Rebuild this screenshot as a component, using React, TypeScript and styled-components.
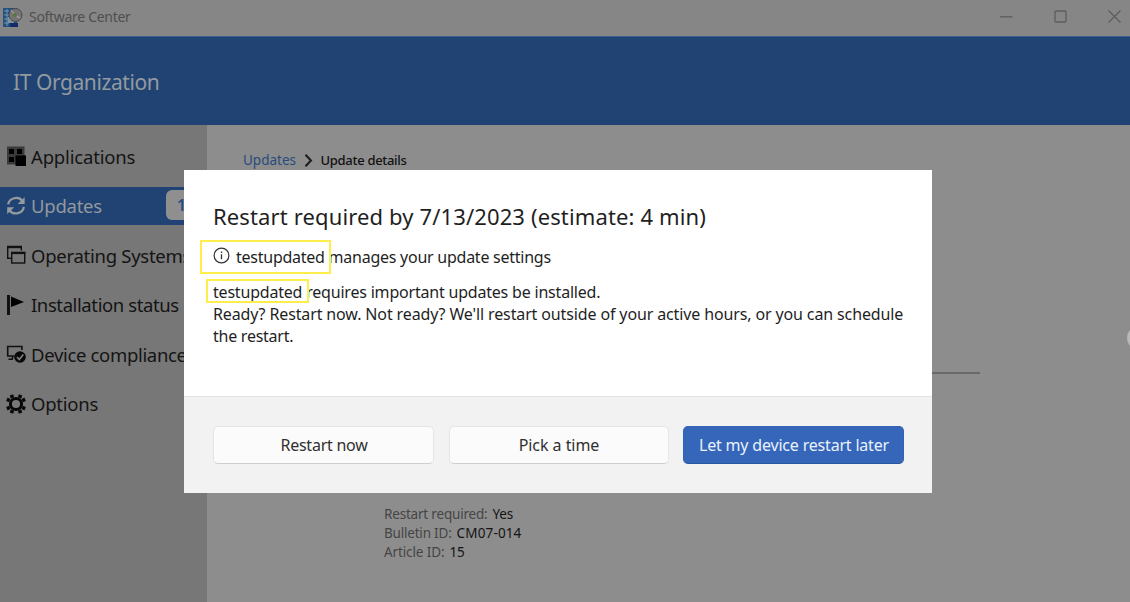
import React from 'react';
import styled, { createGlobalStyle } from 'styled-components';

const GlobalStyle = createGlobalStyle`
  * { box-sizing: border-box; }
  body {
    margin: 0;
    overflow: hidden;
    font-family: "Noto Sans", "Open Sans", sans-serif;
  }
`;

const Window = styled.div`
  position: relative;
  width: 1130px;
  height: 602px;
  display: flex;
  flex-direction: column;
  background: #8d8d8d;
  overflow: hidden;
`;

const TitleBar = styled.header`
  height: 36px;
  flex: none;
  display: flex;
  align-items: center;
  background: #868686;
  color: #4f4f4f;
  padding-left: 3px;
`;

const Label = styled.span<{ $size: number; $track?: number; $weight?: number; $color?: string }>`
  font-size: ${p => p.$size}px;
  letter-spacing: ${p => p.$track ?? 0}px;
  font-weight: ${p => p.$weight ?? 400};
  color: ${p => p.$color ?? 'inherit'};
  white-space: pre;
`;

const TitleText = styled.div`
  margin: -4px 0 0 6px;
  flex: 1;
`;

const WindowControls = styled.div`
  display: flex;
  align-items: center;
  gap: 41px;
  margin: -4px 9px 0 0;
`;

const Banner = styled.div`
  height: 89px;
  flex: none;
  display: flex;
  align-items: center;
  padding: 1px 0 0 13px;
  background: #204373;
  border-top: 1px solid #3a618c;
  color: #939a9f;
`;

const Body = styled.div`
  flex: 1;
  display: flex;
`;

const Sidebar = styled.nav`
  width: 207px;
  flex: none;
  display: flex;
  flex-direction: column;
  gap: 11.5px;
  padding-top: 12px;
  background: #777777;
`;

const NavItem = styled.div<{ $active?: boolean }>`
  height: 38px;
  display: flex;
  align-items: center;
  gap: 5px;
  padding-left: 6px;
  background: ${p => (p.$active ? '#204373' : 'transparent')};
  color: ${p => (p.$active ? '#92999f' : '#141414')};
`;

const NavIcon = styled.svg`
  width: 20px;
  height: 20px;
  flex: none;
`;

const Badge = styled.span`
  width: 34px;
  height: 30px;
  margin: -2px 7px 0 auto;
  display: flex;
  align-items: center;
  padding-left: 11px;
  border-radius: 6px;
  background: #8f8f8f;
  color: #274c80;
`;

const Main = styled.main`
  flex: 1;
  display: flex;
  flex-direction: column;
  padding: 25px 0 0 36px;
`;

const Breadcrumb = styled.div`
  height: 20px;
  display: flex;
  align-items: center;
`;

const Crumb = styled.svg`
  width: 9px;
  height: 13px;
  margin: 0 8px 0 7.5px;
`;

const Divider = styled.div`
  width: 737px;
  height: 2px;
  margin-top: 202px;
  background: #696969;
`;

const Details = styled.div`
  margin: 130px 0 0 141px;
`;

const DetailRow = styled.div`
  height: 19px;
  display: flex;
  align-items: center;
  gap: 5px;
`;

const Handle = styled.div`
  position: absolute;
  left: 1127px;
  top: 325px;
  width: 26px;
  height: 26px;
  border-radius: 50%;
  background: #b9b9b9;
`;

const Dialog = styled.section`
  position: absolute;
  left: 184px;
  top: 169.5px;
  width: 748px;
  height: 323px;
  display: flex;
  flex-direction: column;
  background: #ffffff;
  color: #1f1f1f;
`;

const DialogBody = styled.div`
  height: 226.5px;
  padding: 31px 0 0 29px;
  display: flex;
  flex-direction: column;
`;

const DialogTitle = styled.div`
  height: 30px;
  display: flex;
  align-items: center;
`;

const TextLine = styled.div<{ $top?: number }>`
  position: relative;
  height: 22px;
  margin-top: ${p => p.$top ?? 0}px;
  display: flex;
  align-items: center;
`;

const InfoIcon = styled.svg`
  width: 17px;
  height: 17px;
  margin: -3px 6px 0 0;
`;

const Highlight = styled.div<{ $left: number; $top: number; $width: number; $height: number }>`
  position: absolute;
  left: ${p => p.$left}px;
  top: ${p => p.$top}px;
  width: ${p => p.$width}px;
  height: ${p => p.$height}px;
  border: 2px solid #fdee4b;
`;

const DialogFooter = styled.footer`
  flex: 1;
  display: flex;
  align-items: flex-start;
  gap: 14.5px;
  padding: 29px 28px 0 29px;
  border-top: 1px solid #e4e4e4;
  background: #f2f2f2;
`;

const Button = styled.button<{ $primary?: boolean; $width: number }>`
  width: ${p => p.$width}px;
  height: 38px;
  padding: 0 0 0 1px;
  display: flex;
  align-items: center;
  justify-content: center;
  font-family: inherit;
  border-radius: 5px;
  border: 1px solid ${p => (p.$primary ? '#3264b5' : '#e5e5e5')};
  border-bottom-color: ${p => (p.$primary ? '#28569f' : '#cfcfcf')};
  background: ${p => (p.$primary ? '#3566ba' : '#fbfbfb')};
  color: ${p => (p.$primary ? '#eaf2fb' : '#303030')};
`;

const AppLogo = () => (
  <svg width="20" height="21" viewBox="0 0 20 21">
    <rect x="0" y="0" width="14" height="19" fill="#23507e" />
    <path d="M1 3h5M1 7h5M1 11h5M1 15h5M4 1v17" stroke="#7795ab" strokeWidth="1" />
    <rect x="5" y="9" width="6" height="6" fill="#7d939f" />
    <circle cx="12.5" cy="7" r="6.5" fill="#747474" stroke="#4c4c4c" />
    <path d="M12 7L8 2M12 7l5 3" stroke="#979797" strokeWidth="1.5" />
    <circle cx="12" cy="7" r="2" fill="#5b7440" />
    <rect x="7" y="15" width="8" height="4" fill="#102b66" />
  </svg>
);

const AppsIcon = () => (
  <NavIcon viewBox="0 0 20 20">
    <rect x="1" y="0.5" width="18" height="18" fill="#3a3a3a" />
    <path d="M3 3h5v5H3zM11 3h5v5h-5zM3 11h5v5H3z" fill="#000" />
    <path d="M9.5 9.5H20V20H9.500z" fill="#000" />
    <path d="M19 .5V9" stroke="#777" strokeWidth="1" />
  </NavIcon>
);

const SyncIcon = () => (
  <NavIcon viewBox="0 0 20 20" fill="none" stroke="#949b9f" strokeWidth="2.3">
    <path d="M2.200 8.400A8 7.500 0 0 1 16.500 5" />
    <path d="M17.800 10.800A8 7.500 0 0 1 3.500 14.400" />
    <path d="M18.600 1.200v6.800h-7z" fill="#949b9f" stroke="none" />
    <path d="M1.200 18v-6.800h7z" fill="#949b9f" stroke="none" />
  </NavIcon>
);

const SystemsIcon = () => (
  <NavIcon viewBox="0 0 20 20" fill="none" stroke="#111" strokeWidth="1.400">
    <path d="M1.700 14V1.500h13.600v4" />
    <path d="M1 2.200h15" strokeWidth="2" />
    <path d="M2 13.300h3" />
    <rect x="5.700" y="7.500" width="13" height="10.500" />
    <path d="M5 8h14.400" strokeWidth="2.200" />
  </NavIcon>
);

const FlagIcon = () => (
  <NavIcon viewBox="0 0 20 20">
    <path d="M1 0h3v20H1z" fill="#111" />
    <path d="M5 1.500l13 5.500-13 5z" fill="#000" />
  </NavIcon>
);

const DeviceIcon = () => (
  <NavIcon viewBox="0 0 20 20" fill="none">
    <path d="M8 12H1.700V2.500h14.200V6" stroke="#111" strokeWidth="1.600" />
    <path d="M2.500 15.300H7M6.500 12v3" stroke="#111" strokeWidth="1.500" />
    <circle cx="14" cy="13" r="5.800" fill="#080808" />
    <path d="M11 13l2.300 2.500 4-5" stroke="#858585" strokeWidth="1.500" />
  </NavIcon>
);

const GearIcon = () => (
  <NavIcon viewBox="0 0 20 20" fill="none" stroke="#080808">
    <circle cx="10" cy="10" r="5.600" strokeWidth="3" />
    <g strokeWidth="3.600">
      <path d="M6.500 3.800L5.400.8M13.500 3.800L14.600.8M6.500 16.200l-1.100 3M13.500 16.200l1.100 3M3.800 6.500L.8 5.400M3.800 13.500l-3 1.100M16.200 6.500l3-1.100M16.200 13.500l3 1.100" />
    </g>
  </NavIcon>
);

const navItems = [
  { text: 'Applications', icon: <AppsIcon />, track: -0.17 },
  { text: 'Updates', icon: <SyncIcon />, track: -0.25, count: '1' },
  { text: 'Operating Systems', icon: <SystemsIcon />, track: -0.27 },
  { text: 'Installation status', icon: <FlagIcon />, track: -0.4 },
  { text: 'Device compliance', icon: <DeviceIcon />, track: -0.33 },
  { text: 'Options', icon: <GearIcon />, track: -0.25 },
];

const details = [
  { name: 'Restart required:', value: 'Yes', track: -0.19, valueTrack: -0.2 },
  { name: 'Bulletin ID:', value: 'CM07-014', track: -0.2, valueTrack: 0.15 },
  { name: 'Article ID:', value: '15', track: -0.12, valueTrack: 0 },
];

export default function App() {
  return (
    <>
      <GlobalStyle />
      <Window>
        <TitleBar>
          <AppLogo />
          <TitleText><Label $size={14} $track={-0.3}>Software Center</Label></TitleText>
          <WindowControls>
            <svg width="13" height="13" viewBox="0 0 13 13"><path d="M0 6.800h12.500" stroke="#5d5d5d" strokeWidth="1.300" /></svg>
            <svg width="13" height="13" viewBox="0 0 13 13"><rect x="1" y="1" width="11" height="11" rx="1" fill="none" stroke="#5d5d5d" strokeWidth="1.300" /></svg>
            <svg width="13" height="13" viewBox="0 0 13 13"><path d="M.5.5l12 12M12.500.5l-12 12" stroke="#5d5d5d" strokeWidth="1.300" /></svg>
          </WindowControls>
        </TitleBar>
        <Banner><Label $size={21} $track={-0.42}>IT Organization</Label></Banner>
        <Body>
          <Sidebar>
            {navItems.map(item => (
              <NavItem key={item.text} $active={!!item.count}>
                {item.icon}
                <Label $size={18.5} $track={item.track}>{item.text}</Label>
                {item.count && <Badge><Label $size={16} $weight={600}>{item.count}</Label></Badge>}
              </NavItem>
            ))}
          </Sidebar>
          <Main>
            <Breadcrumb>
              <Label $size={13.5} $color="#284a7c">Updates</Label>
              <Crumb viewBox="0 0 9 13" fill="none"><path d="M1.500.7l5.500 5.800-5.500 5.800" stroke="#1b1b1b" strokeWidth="2" /></Crumb>
              <Label $size={13} $track={-0.3} $weight={500} $color="#111">Update details</Label>
            </Breadcrumb>
            <Divider />
            <Details>
              {details.map(row => (
                <DetailRow key={row.name}>
                  <Label $size={13.5} $track={row.track} $color="#454545">{row.name}</Label>
                  <Label $size={13.5} $track={row.valueTrack} $color="#141414">{row.value}</Label>
                </DetailRow>
              ))}
            </Details>
          </Main>
        </Body>
        <Handle />
        <Dialog>
          <DialogBody>
            <DialogTitle><Label $size={22} $track={0.13}>Restart required by 7/13/2023 (estimate: 4 min)</Label></DialogTitle>
            <TextLine $top={15}>
              <InfoIcon viewBox="0 0 17 17" fill="none" stroke="#333">
                <circle cx="8.500" cy="8.500" r="7.400" strokeWidth="1.200" />
                <path d="M8.500 7.200v5M8.500 4.500v1.500" strokeWidth="1.300" />
              </InfoIcon>
              <Label $size={16} $track={-0.25}>testupdated manages your update settings</Label>
              <Highlight $left={-13} $top={-6} $width={131} $height={34} />
            </TextLine>
            <TextLine $top={13}>
              <Label $size={16} $track={-0.2}>testupdated requires important updates be installed.</Label>
              <Highlight $left={-7} $top={-1.5} $width={103} $height={24} />
            </TextLine>
            <TextLine><Label $size={16} $track={-0.13}>Ready? Restart now. Not ready? We'll restart outside of your active hours, or you can schedule</Label></TextLine>
            <TextLine><Label $size={16} $track={-0.25}>the restart.</Label></TextLine>
          </DialogBody>
          <DialogFooter>
            <Button $width={221}><Label $size={16} $track={-0.25}>Restart now</Label></Button>
            <Button $width={220}><Label $size={16} $track={-0.05}>Pick a time</Label></Button>
            <Button $width={221} $primary><Label $size={16} $track={-0.19}>Let my device restart later</Label></Button>
          </DialogFooter>
        </Dialog>
      </Window>
    </>
  );
}
